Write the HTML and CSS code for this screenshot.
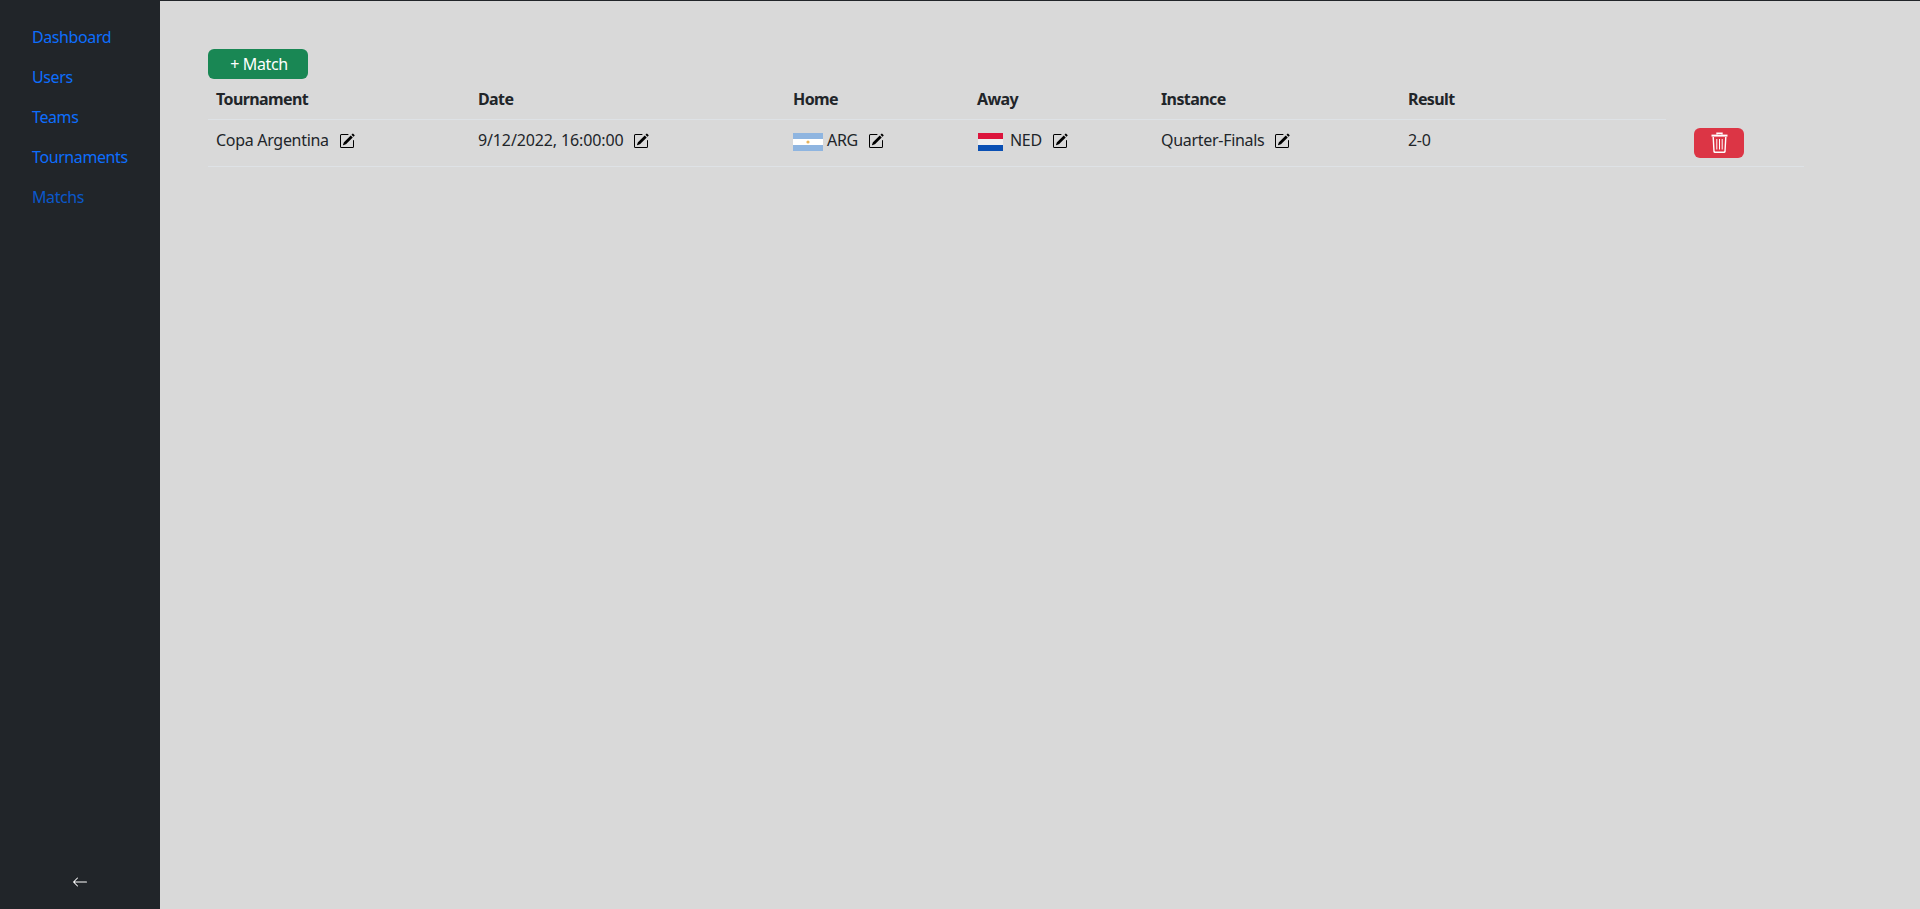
FILE: index.html
```html
<!DOCTYPE html>
<html lang="en">
<head>
<meta charset="utf-8">
<title>Matchs</title>
<link rel="stylesheet" href="styles.css">
</head>
<body>
<div class="app">
  <aside class="sidebar">
    <nav>
      <ul class="nav-list">
        <li><a class="nav-link" href="#">Dashboard</a></li>
        <li><a class="nav-link" href="#">Users</a></li>
        <li><a class="nav-link" href="#">Teams</a></li>
        <li><a class="nav-link" href="#">Tournaments</a></li>
        <li><a class="nav-link active" href="#">Matchs</a></li>
      </ul>
    </nav>
    <div class="collapse-toggle">
      <svg class="arrow" width="16" height="16" viewBox="0 0 16 16" fill="currentColor"><path fill-rule="evenodd" d="M15 8a.5.5 0 0 0-.5-.5H2.707l3.147-3.146a.5.5 0 1 0-.708-.708l-4 4a.5.5 0 0 0 0 .708l4 4a.5.5 0 0 0 .708-.708L2.707 8.500H14.500A.5.5 0 0 0 15 8z"/></svg>
    </div>
  </aside>
  <main class="content">
    <button class="btn btn-add" type="button">+ Match</button>
    <table class="matches">
      <colgroup>
        <col class="c1"><col class="c2"><col class="c3"><col class="c4"><col class="c5"><col class="c6"><col class="c7">
      </colgroup>
      <thead>
        <tr><th>Tournament</th><th>Date</th><th>Home</th><th>Away</th><th>Instance</th><th>Result</th></tr>
      </thead>
      <tbody>
        <tr>
          <td>Copa Argentina<svg class="edit" width="16" height="16" viewBox="0 0 16 16" fill="currentColor"><path d="M15.502 1.94a.5.5 0 0 1 0 .706L14.459 3.69l-2-2L13.502.646a.5.5 0 0 1 .707 0l1.293 1.293zm-1.75 2.456-2-2L4.939 9.21a.5.5 0 0 0-.121.196l-.805 2.414a.25.25 0 0 0 .316.316l2.414-.805a.5.5 0 0 0 .196-.12l6.813-6.814z"/><path fill-rule="evenodd" d="M1 13.5A1.5 1.5 0 0 0 2.5 15h11a1.500 1.500 0 0 0 1.500-1.500v-6a.5.5 0 0 0-1 0v6a.5.5 0 0 1-.5.5h-11a.5.5 0 0 1-.5-.5v-11a.5.5 0 0 1 .5-.5H9a.5.5 0 0 0 0-1H2.500A1.500 1.500 0 0 0 1 2.500v11z"/></svg></td>
          <td class="date">9/12/2022, 16:00:00<svg class="edit" width="16" height="16" viewBox="0 0 16 16" fill="currentColor"><path d="M15.502 1.94a.5.5 0 0 1 0 .706L14.459 3.69l-2-2L13.502.646a.5.5 0 0 1 .707 0l1.293 1.293zm-1.75 2.456-2-2L4.939 9.21a.5.5 0 0 0-.121.196l-.805 2.414a.25.25 0 0 0 .316.316l2.414-.805a.5.5 0 0 0 .196-.12l6.813-6.814z"/><path fill-rule="evenodd" d="M1 13.5A1.5 1.5 0 0 0 2.5 15h11a1.500 1.500 0 0 0 1.500-1.500v-6a.5.5 0 0 0-1 0v6a.5.5 0 0 1-.5.5h-11a.5.5 0 0 1-.5-.5v-11a.5.5 0 0 1 .5-.5H9a.5.5 0 0 0 0-1H2.500A1.500 1.500 0 0 0 1 2.500v11z"/></svg></td>
          <td><svg class="flag" width="30" height="18" viewBox="0 0 30 18"><rect width="30" height="18" fill="#8fb5e0"/><rect y="6" width="30" height="6" fill="#fff"/><circle cx="15" cy="9" r="1.600" fill="#e8b45c"/></svg><span class="team">ARG</span><svg class="edit" width="16" height="16" viewBox="0 0 16 16" fill="currentColor"><path d="M15.502 1.94a.5.5 0 0 1 0 .706L14.459 3.69l-2-2L13.502.646a.5.5 0 0 1 .707 0l1.293 1.293zm-1.75 2.456-2-2L4.939 9.21a.5.5 0 0 0-.121.196l-.805 2.414a.25.25 0 0 0 .316.316l2.414-.805a.5.5 0 0 0 .196-.12l6.813-6.814z"/><path fill-rule="evenodd" d="M1 13.5A1.5 1.5 0 0 0 2.5 15h11a1.500 1.500 0 0 0 1.500-1.500v-6a.5.5 0 0 0-1 0v6a.5.5 0 0 1-.5.5h-11a.5.5 0 0 1-.5-.5v-11a.5.5 0 0 1 .5-.5H9a.5.5 0 0 0 0-1H2.500A1.500 1.500 0 0 0 1 2.500v11z"/></svg></td>
          <td><svg class="flag flag-ned" width="25" height="18" viewBox="0 0 25 18"><rect width="25" height="6" fill="#dc143c"/><rect y="6" width="25" height="6" fill="#eeeeee"/><rect y="12" width="25" height="6" fill="#0a50b4"/></svg><span class="team team-ned">NED</span><svg class="edit" width="16" height="16" viewBox="0 0 16 16" fill="currentColor"><path d="M15.502 1.94a.5.5 0 0 1 0 .706L14.459 3.69l-2-2L13.502.646a.5.5 0 0 1 .707 0l1.293 1.293zm-1.75 2.456-2-2L4.939 9.21a.5.5 0 0 0-.121.196l-.805 2.414a.25.25 0 0 0 .316.316l2.414-.805a.5.5 0 0 0 .196-.12l6.813-6.814z"/><path fill-rule="evenodd" d="M1 13.5A1.5 1.5 0 0 0 2.5 15h11a1.500 1.500 0 0 0 1.500-1.500v-6a.5.5 0 0 0-1 0v6a.5.5 0 0 1-.5.5h-11a.5.5 0 0 1-.5-.5v-11a.5.5 0 0 1 .5-.5H9a.5.5 0 0 0 0-1H2.500A1.500 1.500 0 0 0 1 2.500v11z"/></svg></td>
          <td>Quarter-Finals<svg class="edit" width="16" height="16" viewBox="0 0 16 16" fill="currentColor"><path d="M15.502 1.94a.5.5 0 0 1 0 .706L14.459 3.69l-2-2L13.502.646a.5.5 0 0 1 .707 0l1.293 1.293zm-1.75 2.456-2-2L4.939 9.21a.5.5 0 0 0-.121.196l-.805 2.414a.25.25 0 0 0 .316.316l2.414-.805a.5.5 0 0 0 .196-.12l6.813-6.814z"/><path fill-rule="evenodd" d="M1 13.5A1.5 1.5 0 0 0 2.5 15h11a1.500 1.500 0 0 0 1.500-1.500v-6a.5.5 0 0 0-1 0v6a.5.5 0 0 1-.5.5h-11a.5.5 0 0 1-.5-.5v-11a.5.5 0 0 1 .5-.5H9a.5.5 0 0 0 0-1H2.500A1.500 1.500 0 0 0 1 2.500v11z"/></svg></td>
          <td>2-0</td>
          <td class="actions"><button class="btn btn-del" type="button" aria-label="Delete"><svg width="17" height="21" viewBox="0 0 17 21" fill="none" stroke="#fff" stroke-width="1.400"><path d="M6 2.500V1.200h5v1.300"/><path d="M0.500 3.600h16" stroke-width="2"/><path d="M2.200 5l.8 14.500a1 1 0 0 0 1 .8h9a1 1 0 0 0 1-.8L14.800 5"/><path d="M5.800 7v10.500M8.500 7v10.500M11.200 7v10.500" stroke-width="1"/></svg></button></td>
        </tr>
      </tbody>
    </table>
  </main>
</div>
</body>
</html>
```
FILE: styles.css
```css
* { box-sizing: border-box; }
html, body { margin: 0; height: 100%; }
body {
  font-family: "Noto Sans", sans-serif;
  font-size: 16px;
  line-height: 24px;
  letter-spacing: -0.3px;
  color: #212529;
  background: #d9d9d9;
}
.app {
  display: flex;
  height: 100vh;
  overflow: hidden;
  border-top: 1px solid #212529;
}
.sidebar {
  width: 160px;
  flex: none;
  background: #212529;
  display: flex;
  flex-direction: column;
  justify-content: space-between;
  padding: 16px;
}
.nav-list { list-style: none; margin: 0; padding: 0; }
.nav-link {
  display: block;
  padding: 8px 16px;
  color: #0d6efd;
  letter-spacing: -0.4px;
  text-decoration: none;
}
.nav-link.active { color: #0a58ca; }
.collapse-toggle {
  display: flex;
  justify-content: center;
  color: #fff;
  padding-bottom: 3px;
}
.content {
  flex: 1;
  padding: 48px 116px 0 48px;
  min-width: 0;
}
.btn {
  display: block;
  border: 1px solid transparent;
  border-radius: 6px;
  color: #fff;
  font: inherit;
  letter-spacing: -0.4px;
  height: 30px;
  padding: 0;
}
.btn-add { width: 100px; padding-left: 2px; background: #198754; }
.btn-del {
  width: 50px;
  background: #dc3545;
  margin-left: 20px;
  display: flex;
  align-items: center;
  justify-content: center;
}
.matches {
  width: 1596px;
  table-layout: fixed;
  border-collapse: collapse;
}
.c1 { width: 262px; }
.c2 { width: 315px; }
.c3 { width: 184px; }
.c4 { width: 184px; }
.c5 { width: 247px; }
.c6 { width: 266px; }
.c7 { width: 138px; }
th, td {
  padding: 8px;
  text-align: left;
  vertical-align: top;
  border-bottom: 1px solid #dee2e6;
}
th { font-weight: 700; letter-spacing: -0.6px; }
.date { letter-spacing: -0.13px; }
.edit { vertical-align: -3px; color: #000; margin-left: 10px; }
.flag { vertical-align: -5px; }
.team { margin-left: 4px; }
.flag-ned { margin-left: 1px; }
.team-ned { margin-left: 7px; }
```
